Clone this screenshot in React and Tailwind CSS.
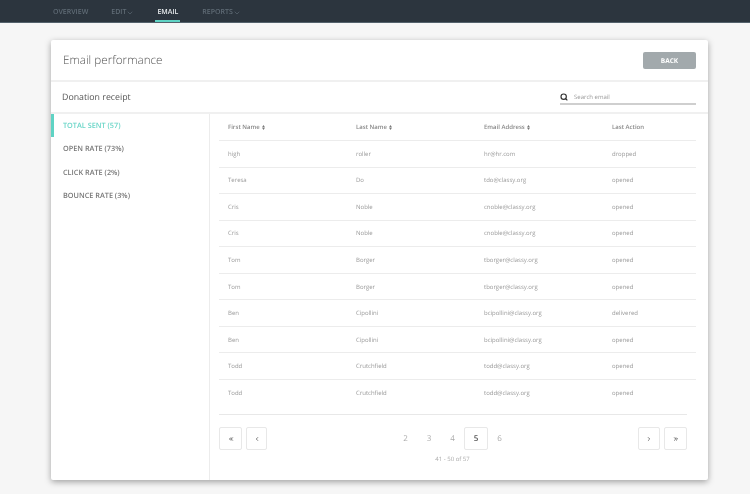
import { Search, ChevronDown, ChevronLeft, ChevronRight, ChevronsLeft, ChevronsRight } from "lucide-react";

const rows = [
  ["high", "roller", "hr@hr.com", "dropped"],
  ["Teresa", "Do", "tdo@classy.org", "opened"],
  ["Cris", "Noble", "cnoble@classy.org", "opened"],
  ["Cris", "Noble", "cnoble@classy.org", "opened"],
  ["Tom", "Borger", "tborger@classy.org", "opened"],
  ["Tom", "Borger", "tborger@classy.org", "opened"],
  ["Ben", "Cipollini", "bcipollini@classy.org", "delivered"],
  ["Ben", "Cipollini", "bcipollini@classy.org", "opened"],
  ["Todd", "Crutchfield", "todd@classy.org", "opened"],
  ["Todd", "Crutchfield", "todd@classy.org", "opened"],
];

function SortIcon() {
  return (
    <svg width="3" height="5" viewBox="0 0 4 7" className="ml-[2px] inline-block fill-[#777]">
      <path d="M2 0 4 3H0ZM2 7 0 4H4Z" />
    </svg>
  );
}

function NavItem({ label, active, caret }) {
  return (
    <div className={`flex h-[22px] items-center border-b-2 px-[2px] pt-[6px] ${active ? "mr-[1px] border-[#5fd3c4] text-[#e8ecee]" : "border-transparent text-[#5f6b75]"}`}>
      {label}
      {caret && <ChevronDown size={8} />}
    </div>
  );
}

function PageButton({ children, className = "" }) {
  return (
    <div className={`flex h-[23px] items-center justify-center rounded-[2px] border border-[#e8e8e8] bg-white text-[#555] ${className}`}>
      {children}
    </div>
  );
}

export default function App() {
  return (
    <div className="flex h-[494px] w-[750px] flex-col overflow-hidden bg-[#f6f6f6] font-['Open_Sans',sans-serif] [text-rendering:geometricPrecision] blur-[0.3px]">
      <div className="flex h-[23px] shrink-0 items-start gap-[19px] border-b border-[#54626c] bg-[#2c353e] pl-[51px] text-[7px] font-semibold">
        <NavItem label="OVERVIEW" />
        <NavItem label="EDIT" caret />
        <NavItem label="EMAIL" active />
        <NavItem label="REPORTS" caret />
      </div>

      <div className="ml-[51px] mt-[17px] flex h-[440px] w-[657px] flex-col rounded-[2px] bg-white shadow-[0_2px_6px_rgba(0,0,0,0.35)]">
        <div className="flex h-[42px] shrink-0 items-center justify-between border-b-2 border-[#f0f0f0] px-[12px] pt-[1px]">
          <div className="text-[11.7px] font-light text-[#555]">Email performance</div>
          <div className="flex h-[17px] w-[53px] items-center justify-center rounded-[2px] bg-[#a2a9ac] text-[6.5px] font-bold text-white">BACK</div>
        </div>

        <div className="flex h-[32px] shrink-0 items-center justify-between border-b-2 border-[#f0f0f0] pl-[11px] pr-[12px] pt-[1px]">
          <div className="text-[8.8px] text-[#555]">Donation receipt</div>
          <div className="flex h-[15px] w-[136px] items-center border-b-2 border-[#cfcfcf] pt-[1px]">
            <Search size={8} strokeWidth={3.5} className="text-[#333]" />
            <span className="ml-[6px] text-[6px] text-[#999]">Search email</span>
          </div>
        </div>

        <div className="flex min-h-0 flex-1">
          <div className="w-[159px] shrink-0 border-r border-[#ececec] text-[7.3px] font-semibold text-[#777]">
            <div className="flex h-[23px] items-center border-l-[3px] border-[#5fd3c4] pl-[9px] pt-[1px] text-[#6bd6c8]">TOTAL SENT (57)</div>
            <div className="flex h-[23.5px] items-center pl-[12px] pt-[2px]">OPEN RATE (73%)</div>
            <div className="flex h-[23px] items-center pl-[12px] pt-[2px]">CLICK RATE (2%)</div>
            <div className="flex h-[23.5px] items-center pl-[12px] pt-[2px]">BOUNCE RATE (3%)</div>
          </div>

          <div className="flex min-w-0 flex-1 flex-col pl-[9px]">
            <div className="mr-[12px]">
              <div className="grid h-[27px] grid-cols-[128px_128px_128px_1fr] items-center border-b border-[#ececec] pl-[9px] pt-[1px] text-[6px] font-semibold text-[#888]">
                <div>First Name<SortIcon /></div>
                <div>Last Name<SortIcon /></div>
                <div>Email Address<SortIcon /></div>
                <div>Last Action</div>
              </div>
              {rows.map((row, i) => (
                <div key={i} className="grid h-[26.55px] grid-cols-[128px_128px_128px_1fr] items-center border-b border-[#ececec] pl-[9px] pt-[1px] text-[6px] text-[#999] last:border-b-0">
                  {row.map((cell, j) => (
                    <div key={j}>{cell}</div>
                  ))}
                </div>
              ))}
            </div>

            <div className="mr-[21px] mt-[8px] border-t border-[#e8e8e8] pt-[12px]">
              <div className="flex items-start justify-between">
                <div className="flex gap-[4px]">
                  <PageButton className="w-[23px]"><ChevronsLeft size={6} strokeWidth={3.5} /></PageButton>
                  <PageButton className="w-[21px]"><ChevronLeft size={6} strokeWidth={3} /></PageButton>
                </div>
                <div className="flex flex-col items-center">
                  <div className="flex h-[23px] items-center text-[8px] text-[#aaa]">
                    <span className="w-[23.5px] text-center">2</span>
                    <span className="w-[23.5px] text-center">3</span>
                    <span className="w-[23.5px] text-center">4</span>
                    <PageButton className="w-[23.5px] font-semibold">5</PageButton>
                    <span className="w-[23.5px] text-center">6</span>
                  </div>
                  <div className="mt-[5px] text-[6px] text-[#aaa]">41 - 50 of 57</div>
                </div>
                <div className="flex gap-[4px]">
                  <PageButton className="w-[22px]"><ChevronRight size={6} strokeWidth={3} /></PageButton>
                  <PageButton className="w-[23px]"><ChevronsRight size={6} strokeWidth={3.5} /></PageButton>
                </div>
              </div>
            </div>
          </div>
        </div>
      </div>
    </div>
  );
}
